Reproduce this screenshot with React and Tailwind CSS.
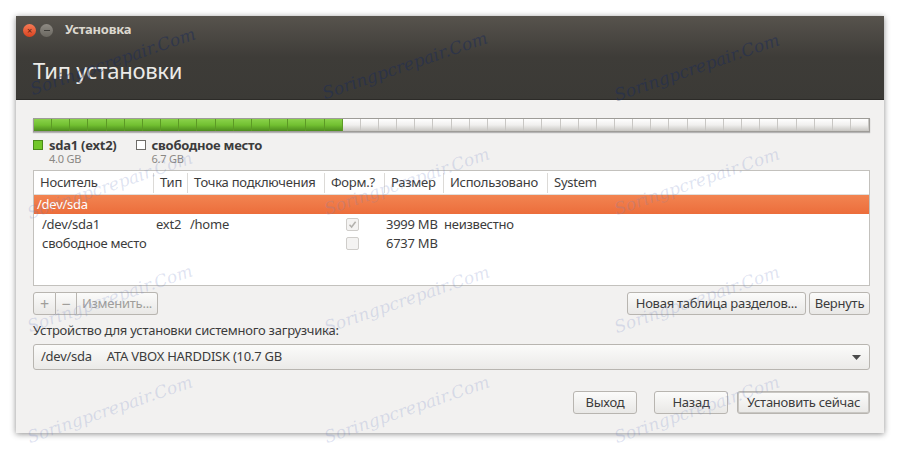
import React from "react";

const font = { fontFamily: "'Noto Sans', 'DejaVu Sans', sans-serif" };

// watermark centres, copied off the screenshot
const marks = [
  [113, 62, true], [405, 66, true], [697, 68, true],
  [110, 186], [407, 182], [697, 182],
  [110, 299], [407, 300], [697, 300],
  [110, 410], [407, 410], [697, 410],
];

const Btn = ({ children, className = "", disabled }) => (
  <div
    className={`flex h-[23px] items-center justify-center whitespace-nowrap rounded-[3px] border border-[#b8b5b0] bg-gradient-to-b from-[#fbfbfa] to-[#e9e8e6] px-[4px] text-[13px] ${
      disabled ? "text-[#a09e9a]" : "text-[#3c3c3c]"
    } ${className}`}
  >
    {children}
  </div>
);

const Check = ({ checked }) => (
  <div className="flex h-[13px] w-[13px] items-center justify-center rounded-[2px] border border-[#cfcdca] bg-[#f4f3f2]">
    {checked && (
      <svg width="9" height="9" viewBox="0 0 9 9">
        <path d="M1.5 4.8 L3.6 7 L7.6 1.8" fill="none" stroke="#b3b1ad" strokeWidth="1.5" />
      </svg>
    )}
  </div>
);

const cols = [
  { name: "Носитель", w: "w-[120px]" },
  { name: "Тип", w: "w-[34px]" },
  { name: "Точка подключения", w: "w-[137px]" },
  { name: "Форм.?", w: "w-[60px]" },
  { name: "Размер", w: "w-[59px]" },
  { name: "Использовано", w: "w-[104px]" },
  { name: "System", w: "flex-1" },
];

export default function App() {
  const segs = Array.from({ length: 46 });
  return (
    <div className="relative h-[449px] w-[900px] overflow-hidden bg-white tracking-[-0.25px] text-[#3c3c3c]" style={font}>
      <div className="ml-[16px] mt-[16px] flex h-[417px] w-[868px] flex-col shadow-[0_1px_6px_rgba(0,0,0,0.45)]">
        {/* header */}
        <div className="flex h-[84px] flex-col border-b border-[#2c2b28] bg-gradient-to-b from-[#57534d] via-[#3e3c38] to-[#3b3a36]">
          <div className="flex h-[27px] items-center pl-[7px] pt-[1px]">
            <div className="flex h-[13px] w-[13px] items-center justify-center rounded-full bg-gradient-to-b from-[#f57a55] to-[#d9421e] text-[9px] leading-none text-[#5a2010]">
              ×
            </div>
            <div className="ml-[4px] flex h-[13px] w-[13px] items-center justify-center rounded-full bg-gradient-to-b from-[#8f8b84] to-[#6a6760]">
              <div className="h-[1px] w-[6px] bg-[#3e3c38]" />
            </div>
            <div className="ml-[12px] text-[13px] font-bold text-[#dcd8cf]">Установка</div>
          </div>
          <div className="pl-[17px] pt-[7px] text-[22px] leading-[40px] text-[#ecebe8]">Тип установки</div>
        </div>

        {/* body */}
        <div className="flex flex-1 flex-col bg-[#f2f1f0] pl-[17px] pr-[14px] pt-[18px]">
          {/* partition bar */}
          <div className="flex h-[14px] overflow-hidden border border-[#9e9c98] shadow-[0_1px_1px_rgba(0,0,0,0.25)]">
            {segs.map((_, i) => (
              <div
                key={i}
                className={`flex-1 border-r ${
                  i < 17
                    ? "border-[#5c9a25] bg-gradient-to-b from-[#8ad24a] via-[#72c031] to-[#4d8c1e]"
                    : "border-[#c9c7c4] bg-gradient-to-b from-[#ffffff] via-[#f0efee] to-[#c8c6c2]"
                }`}
              />
            ))}
          </div>

          {/* legend */}
          <div className="mt-[5px] flex h-[32px]">
            <div className="flex">
              <div className="mt-[3px] h-[10px] w-[10px] border border-[#4b8a1a] bg-[#72c72a]" />
              <div className="ml-[6px] flex flex-col">
                <div className="text-[13px] font-bold leading-[16px] text-[#3c3c3c]">sda1 (ext2)</div>
                <div className="text-[11px] leading-[12px] text-[#8a8884]">4.0 GB</div>
              </div>
            </div>
            <div className="ml-[19px] flex">
              <div className="mt-[3px] h-[10px] w-[10px] border border-[#6e6c68] bg-white" />
              <div className="ml-[6px] flex flex-col">
                <div className="text-[13px] font-bold leading-[16px] text-[#3c3c3c]">свободное место</div>
                <div className="text-[11px] leading-[12px] text-[#8a8884]">6.7 GB</div>
              </div>
            </div>
          </div>

          {/* table */}
          <div className="mt-[1px] flex h-[116px] flex-col whitespace-nowrap border border-[#c3c1bd] bg-white text-[13px]">
            <div className="flex h-[24px] items-center border-b border-[#e0dfdc]">
              {cols.map((c, i) => (
                <div
                  key={c.name}
                  className={`${c.w} flex h-[20px] items-center px-[6px] ${
                    i < cols.length - 1 ? "border-r border-[#dcdad7]" : ""
                  }`}
                >
                  {c.name}
                </div>
              ))}
            </div>
            <div className="flex h-[19px] items-center bg-gradient-to-b from-[#f28451] to-[#ec6d3b] pl-[3px] text-white">
              /dev/sda
            </div>
            <div className="mt-[1px] flex h-[19px] items-center">
              <div className="w-[116px] pl-[8px]">/dev/sda1</div>
              <div className="w-[34px] pl-[6px]">ext2</div>
              <div className="w-[137px] pl-[6px]">/home</div>
              <div className="flex w-[60px] justify-center pl-[2px]"><Check checked /></div>
              <div className="w-[59px] pl-[5px]">3999 MB</div>
              <div className="pl-[4px]">неизвестно</div>
            </div>
            <div className="flex h-[19px] items-center">
              <div className="w-[287px] pl-[8px]">свободное место</div>
              <div className="flex w-[60px] justify-center pl-[2px]"><Check /></div>
              <div className="pl-[5px]">6737 MB</div>
            </div>
          </div>

          {/* table buttons */}
          <div className="mt-[6px] flex h-[23px] justify-between">
            <div className="flex">
              <Btn disabled className="w-[23px] rounded-r-none !px-0 text-[16px] text-[#8e8c88]">+</Btn>
              <Btn disabled className="w-[21px] rounded-none border-l-0 !px-0 text-[16px] text-[#8e8c88]">−</Btn>
              <Btn disabled className="w-[81px] rounded-l-none border-l-0">Изменить...</Btn>
            </div>
            <div className="flex gap-[3px]">
              <Btn className="w-[179px]">Новая таблица разделов...</Btn>
              <Btn className="w-[61px]">Вернуть</Btn>
            </div>
          </div>

          <div className="mt-[6px] h-[18px] text-[13px] leading-[18px]">
            Устройство для установки системного загрузчика:
          </div>

          {/* combo */}
          <div className="mt-[5px] flex h-[26px] items-center justify-between rounded-[3px] border border-[#b8b5b0] bg-gradient-to-b from-[#fbfbfa] to-[#ebeae8] pl-[7px] pr-[8px] text-[13px]">
            <span className="whitespace-nowrap">
              /dev/sda<span className="ml-[15px]">ATA VBOX HARDDISK (10.7 GB</span>
            </span>
            <svg width="9" height="5" viewBox="0 0 9 5">
              <path d="M0 0 H9 L4.5 5 Z" fill="#4a4a4a" />
            </svg>
          </div>

          {/* footer */}
          <div className="mt-[21px] flex justify-end gap-[17px]">
            <Btn className="w-[64px]">Выход</Btn>
            <div className="flex gap-[9px]">
              <Btn className="w-[74px]">Назад</Btn>
              <Btn className="w-[133px] border-[#8a8782] shadow-[inset_0_0_0_1px_#c9c7c3]">Установить сейчас</Btn>
            </div>
          </div>
        </div>
      </div>

      {/* watermark overlay */}
      {marks.map(([x, y, dark], i) => (
        <div
          key={i}
          className={`pointer-events-none absolute w-[190px] -translate-x-1/2 -translate-y-1/2 -rotate-[19deg] text-center text-[17px] italic tracking-[0px] ${
            dark ? "text-[rgba(30,45,85,0.55)]" : "text-[rgba(110,130,195,0.22)]"
          }`}
          style={{ left: x, top: y, fontFamily: "'DejaVu Serif', serif" }}
        >
          Soringpcrepair.Com
        </div>
      ))}
    </div>
  );
}
